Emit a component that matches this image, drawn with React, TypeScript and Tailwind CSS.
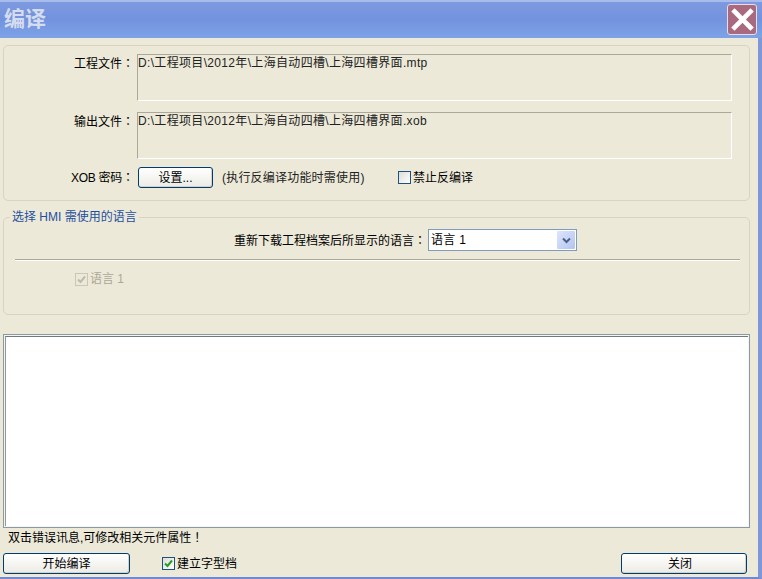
import React from "react";

const font = { fontFamily: '"Liberation Sans","Noto Sans CJK SC",sans-serif' };

function Colon() {
  return <span className="font-['Noto_Sans_CJK_TC']">：</span>;
}

function Field({ label, value }: { label: string; value: string }) {
  return (
    <div className="flex items-start">
      <div className="w-[133px] pt-[1px] pr-[3px] text-right text-[12px] leading-[16px] text-black">
        {label}
        <Colon />
      </div>
      <div className="h-[47px] w-[595px] border border-b-white border-r-white border-l-[#aca899] border-t-[#aca899] text-[12px] leading-[16px] tracking-[0.33px] text-[#222]">
        {value}
      </div>
    </div>
  );
}

function XpButton({ label, className }: { label: string; className: string }) {
  return (
    <div
      className={`flex items-center justify-center rounded-[3px] border border-[#003c74] bg-gradient-to-b from-white to-[#ecebe5] text-[12px] text-black shadow-[inset_-1px_-1px_0_#d6d0c5] ${className}`}
    >
      {label}
    </div>
  );
}

export default function App() {
  return (
    <div style={font} className="flex h-[579px] w-[762px] flex-col overflow-hidden bg-[#ece9d8] select-none">
      <div className="flex h-[38px] shrink-0 items-center justify-between bg-gradient-to-b from-[#7f9be0] via-[#7392df] to-[#7da3e6] pl-[4px] pr-[5px] shadow-[inset_0_2px_0_#a9bdec]">
        <span className="text-[21px] font-bold leading-[38px] text-[#d5dcee]">编译</span>
        <div className="flex h-[31px] w-[30px] items-center justify-center rounded-[3px] border border-[#e8dfe6] bg-[#a96a80]">
          <svg width="23" height="23" viewBox="0 0 23 23">
            <path d="M3.5 3.5 L19.5 19.5 M19.5 3.5 L3.5 19.5" stroke="#ffffff" strokeWidth="4.6" strokeLinecap="square" />
          </svg>
        </div>
      </div>

      <div className="flex min-h-0 flex-1 border-b-2 border-r-4 border-b-[#6f88cf] border-r-[#7f96d8]">
        <div className="flex min-w-0 flex-1 flex-col pl-[3px] pr-[8px]">
          <div className="mt-[7px] flex h-[156px] w-[747px] flex-col rounded-[5px] border border-[#d8d4bf] pt-[8px]">
            <Field label="工程文件" value="D:\工程项目\2012年\上海自动四槽\上海四槽界面.mtp" />
            <div className="mt-[11px]">
              <Field label="输出文件" value="D:\工程项目\2012年\上海自动四槽\上海四槽界面.xob" />
            </div>
            <div className="mt-[8px] flex items-center text-[12px] text-black">
              <div className="w-[134px] pr-[4px] text-right">
                <span className="tracking-[-0.3px]">XOB 密码</span>
                <Colon />
              </div>
              <XpButton label="设置..." className="h-[21px] w-[75px]" />
              <span className="ml-[9px] w-[169px] tracking-[0.2px] text-[#222]">(执行反编译功能时需使用)</span>
              <span className="ml-[7px] h-[13px] w-[13px] border border-[#1c5180] bg-gradient-to-br from-[#dcdcd7] to-white" />
              <span className="ml-[2px]">禁止反编译</span>
            </div>
          </div>

          <div className="mt-[16px] flex h-[98px] w-[747px] flex-col rounded-[5px] border border-[#d8d4bf]">
            <div className="-mt-[9px] ml-[6px] w-fit bg-[#ece9d8] px-[2px] text-[12px] leading-[16px] text-[#1f4f9f]">
              选择 HMI 需使用的语言
            </div>
            <div className="mt-[4px] flex items-center pl-[230px] text-[12px]">
              <span className="w-[194px] text-black">
                重新下载工程档案后所显示的语言
                <Colon />
              </span>
              <div className="flex h-[22px] w-[149px] items-center justify-between border border-[#7f9db9] bg-white pl-[2px] pr-[1px]">
                <span className="tracking-[0.3px] text-black">语言 1</span>
                <div className="flex h-[18px] w-[18px] items-center justify-center rounded-[1px] bg-gradient-to-br from-[#dde6fb] to-[#b2c4f0]">
                  <svg width="9" height="7" viewBox="0 0 9 7">
                    <path d="M1 1.5 L4.5 5 L8 1.5" fill="none" stroke="#4d6185" strokeWidth="2" />
                  </svg>
                </div>
              </div>
            </div>
            <div className="ml-[11px] mt-[8px] h-[2px] w-[725px] border-b border-t border-b-white border-t-[#aca899]" />
            <div className="ml-[71px] mt-[9px] flex items-center text-[12px] text-[#aca899]">
              <span className="flex h-[13px] w-[13px] items-center justify-center border border-[#c9c7ba] bg-[#ece9d8]">
                <svg width="9" height="9" viewBox="0 0 9 9">
                  <path d="M1 4.5 L3.5 7 L8 1.5" fill="none" stroke="#bdbbad" strokeWidth="2" />
                </svg>
              </span>
              <span className="ml-[2px]">语言 1</span>
            </div>
          </div>

          <div className="mt-[19px] h-[194px] w-[747px] border border-[#8a9aa0] bg-[#f4f6f5] p-[1px]">
            <div className="h-full w-full border-l border-t border-l-[#8f9a9c] border-t-[#6f7a7c] bg-white" />
          </div>

          <div className="ml-[5px] mt-[1px] text-[12px] leading-[16px] text-black">
            双击错误讯息,可修改相关元件属性
            <span className="font-['Noto_Sans_CJK_TC']">！</span>
          </div>

          <div className="mt-[7px] flex items-center text-[12px]">
            <XpButton label="开始编译" className="h-[21px] w-[127px]" />
            <span className="ml-[32px] flex h-[13px] w-[13px] items-center justify-center border border-[#1c5180] bg-gradient-to-br from-[#dcdcd7] to-white">
              <svg width="9" height="9" viewBox="0 0 9 9">
                <path d="M1 4.5 L3.5 7 L8 1.5" fill="none" stroke="#21a121" strokeWidth="2" />
              </svg>
            </span>
            <span className="ml-[2px] text-black">建立字型档</span>
            <div className="flex-1" />
            <XpButton label="关闭" className="mr-[3px] h-[21px] w-[126px] pr-[8px]" />
          </div>
        </div>
      </div>
    </div>
  );
}
